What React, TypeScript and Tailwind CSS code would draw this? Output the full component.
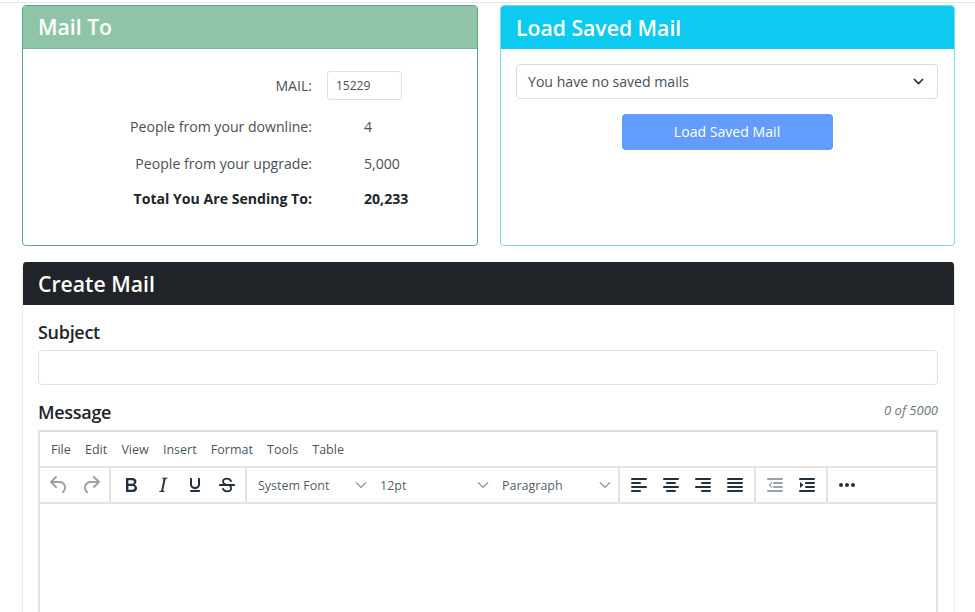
import React from "react";

const I = ({ d, c = "#222f3e" }: { d: string; c?: string }) => (
  <svg width="24" height="24" viewBox="0 0 24 24" fill={c}><path d={d} /></svg>
);
const Btn = ({ d, c }: { d: string; c?: string }) => (
  <div className="w-[32px] h-full flex items-center justify-center"><I d={d} c={c} /></div>
);
const bar = (x: number, y: number, w: number) => `M${x} ${y}h${w}a1 1 0 0 1 0 2h-${w}a1 1 0 0 1 0-2z`;
const P = {
  undo: "M6.4 8H12c3.7 0 6.2 2 6.8 5.1.6 2.7-.4 5.6-2.3 6.8a1 1 0 0 1-1-1.8c1.1-.6 1.8-2.7 1.4-4.6-.5-2.1-2.1-3.5-4.9-3.5H6.4l3.3 3.3a1 1 0 1 1-1.4 1.4l-5-5a1 1 0 0 1 0-1.4l5-5a1 1 0 0 1 1.4 1.4L6.4 8z",
  redo: "M17.6 10H12c-2.8 0-4.4 1.4-4.9 3.5-.4 2 .3 4 1.4 4.6a1 1 0 1 1-1 1.8c-2-1.2-2.9-4.1-2.3-6.8.6-3 3-5.1 6.8-5.1h5.6l-3.3-3.3a1 1 0 1 1 1.4-1.4l5 5a1 1 0 0 1 0 1.4l-5 5a1 1 0 0 1-1.4-1.4l3.3-3.3z",
  bold: "M7.8 19c-.3 0-.5 0-.6-.2l-.2-.5V5.7c0-.2 0-.4.2-.5l.6-.2h5c1.5 0 2.7.3 3.5 1 .7.6 1.1 1.4 1.1 2.5a3 3 0 0 1-.6 1.9c-.4.6-1 1-1.6 1.2.4.1.9.3 1.3.6s.8.7 1 1.2c.4.4.5 1 .5 1.6 0 1.3-.4 2.3-1.3 3-.8.7-2.1 1-3.8 1H7.8zm5-8.3c.6 0 1.2-.1 1.6-.5.4-.3.6-.7.6-1.3 0-1.1-.8-1.7-2.3-1.7H9.3v3.5h3.4zm.5 6c.7 0 1.3-.1 1.7-.4.4-.4.6-.9.6-1.5s-.2-1-.7-1.4c-.4-.3-1-.4-2-.4H9.4v3.8h4z",
  italic: "M16.7 4.7l-.1.9h-.3c-.6 0-1 0-1.4.3-.3.3-.4.6-.5 1.1l-2.1 9.8v.6c0 .5.4.8 1.4.8h.2l-.2.8H8l.2-.8h.2c1.1 0 1.8-.5 2-1.5l2-9.8.1-.5c0-.6-.4-.8-1.4-.8h-.3l.2-.9h5.8z",
  underline: "M16 5c.6 0 1 .4 1 1v5.5a4 4 0 0 1-.4 1.8l-1 1.4a5.3 5.3 0 0 1-5.5 1 5 5 0 0 1-1.6-1c-.5-.4-.8-.9-1.1-1.4a4 4 0 0 1-.4-1.8V6c0-.6.4-1 1-1s1 .4 1 1v5.5c0 .3 0 .6.2 1l.6.7a3.3 3.3 0 0 0 2.2.8 3.4 3.4 0 0 0 2.2-.8c.3-.2.4-.5.6-.8l.2-.9V6c0-.6.4-1 1-1zM8 17h8c.6 0 1 .4 1 1s-.4 1-1 1H8a1 1 0 0 1 0-2z",
  left: bar(5, 5, 14) + bar(5, 9, 8) + bar(5, 13, 14) + bar(5, 17, 8),
  center: bar(5, 5, 14) + bar(8, 9, 8) + bar(5, 13, 14) + bar(8, 17, 8),
  right: bar(5, 5, 14) + bar(11, 9, 8) + bar(5, 13, 14) + bar(11, 17, 8),
  justify: bar(5, 5, 14) + bar(5, 9, 14) + bar(5, 13, 14) + bar(5, 17, 14),
  outdent: bar(5, 5, 14) + bar(11, 9, 8) + bar(11, 13, 8) + bar(5, 17, 14) + "M8.6 9.2a.5.5 0 0 1 .7.7L7.2 12l2.1 2.1a.5.5 0 0 1-.7.7L6 12.4a.5.5 0 0 1 0-.8z",
  indent: bar(5, 5, 14) + bar(11, 9, 8) + bar(11, 13, 8) + bar(5, 17, 14) + "M5 9l3.5 3L5 15z",
  more: "M6 10a2 2 0 0 0-2 2c0 1.1.9 2 2 2a2 2 0 0 0 2-2 2 2 0 0 0-2-2zm12 0a2 2 0 0 0-2 2c0 1.1.9 2 2 2a2 2 0 0 0 2-2 2 2 0 0 0-2-2zm-6 0a2 2 0 0 0-2 2c0 1.1.9 2 2 2a2 2 0 0 0 2-2 2 2 0 0 0-2-2z",
};

const Strike = () => (
  <div className="w-[32px] h-full flex items-center justify-center">
    <svg width="24" height="24" viewBox="0 0 24 24" fill="none" stroke="#222f3e" strokeWidth="1.8" strokeLinecap="round">
      <path d="M16 8.2c-.7-1.6-2.1-2.5-4-2.5-2.4 0-4 1.2-4 3 0 1.3 1 2.1 2.4 2.7M8 15.8c.7 1.6 2.2 2.5 4.1 2.5 2.5 0 4-1.3 4-3.1 0-.9-.3-1.6-1-2.2" />
      <path d="M4.8 12h14.4" />
    </svg>
  </div>
);

const Sel = ({ t }: { t: string }) => (
  <div className="w-[122px] h-full pl-[11px] pr-[2px] flex items-center justify-between text-[12.5px] text-[#222f3e]/80">
    <span className="mt-[2px]">{t}</span>
    <svg width="12" height="12" viewBox="0 0 10 10" fill="none" stroke="#8a9099" strokeWidth="1.1" strokeLinecap="round"><path d="M1 3L5 7l4-4" /></svg>
  </div>
);

const Row = ({ label, value, bold, h }: { label: string; value: React.ReactNode; bold?: boolean; h: string }) => (
  <div className={`flex items-center ${h} ${bold ? "font-bold text-[#212529]" : "text-[#495057]"}`}>
    <div className="w-[289px] text-right">{label}</div>
    <div className="flex-1 pl-[52px]">{value}</div>
  </div>
);

export default function App() {
  return (
    <div className="h-[612px] overflow-hidden bg-white pl-[22px] pr-[20px] pt-[2px] text-[14.1px] text-[#212529] relative" style={{ fontFamily: '"Open Sans", "Noto Sans", sans-serif' }}>
      <div className="absolute left-0 right-0 top-[2px] h-px bg-[#e3e5e8]" />
      <div className="pt-[3px] flex gap-[22px] h-[244px]">
        <section className="w-[456px] rounded-[4px] border border-[#5aa688] overflow-hidden flex flex-col">
          <h2 className="h-[43px] shrink-0 bg-[#8fc4a9] text-white text-[21.2px] font-semibold pl-[15px] flex items-center border-b border-[#7db89b]">Mail To</h2>
          <div className="pt-[22px]">
            <div className="flex items-center h-[29px] text-[#495057]">
              <div className="w-[289px] text-right">MAIL:</div>
              <div className="pl-[15px]">
                <div className="w-[75px] h-[29px] rounded-[3px] border border-[#dcdfe3] flex items-center pl-[8px] text-[12px]">15229</div>
              </div>
            </div>
            <Row h="h-[37px] mt-[8px]" label="People from your downline:" value="4" />
            <Row h="h-[37px]" label="People from your upgrade:" value="5,000" />
            <Row h="h-[33px]" bold label="Total You Are Sending To:" value="20,233" />
          </div>
        </section>
        <section className="w-[455px] rounded-[4px] border border-[#72dcee] overflow-hidden flex flex-col">
          <h2 className="h-[43px] shrink-0 bg-[#0dcaf0] text-white text-[21.2px] font-semibold pl-[15px] flex items-center">Load Saved Mail</h2>
          <div className="pl-[15px] pr-[16px] pt-[15px]">
            <div className="h-[35px] rounded-[4px] border border-[#d9dce0] flex items-center justify-between pl-[11px] pr-[13px] text-[#495057]">
              <span>You have no saved mails</span>
              <svg width="11" height="11" viewBox="0 0 16 16" fill="none" stroke="#343a40" strokeWidth="2.4" strokeLinecap="round" strokeLinejoin="round"><path d="M2 5l6 6 6-6" /></svg>
            </div>
            <div className="mt-[15px] flex justify-center">
              <div className="w-[211px] h-[36px] rounded-[4px] bg-[#639cff] text-white flex items-center justify-center">Load Saved Mail</div>
            </div>
          </div>
        </section>
      </div>
      <section className="mt-[16px] border border-t-0 border-[#ececec] rounded-t-[4px] h-[400px] overflow-hidden">
        <h2 className="h-[43px] bg-[#212529] text-white text-[21.2px] font-semibold pl-[15px] flex items-center">Create Mail</h2>
        <div className="pl-[15px] pr-[16px]">
          <div className="h-[45px] flex items-end pb-[9px] text-[18px] font-semibold leading-none tracking-[-0.3px]">Subject</div>
          <div className="h-[35px] rounded-[4px] border border-[#dcdfe3]" />
          <div className="h-[45px] flex items-end justify-between pb-[9px]">
            <span className="text-[18px] font-semibold leading-none tracking-[-0.3px]">Message</span>
            <span className="text-[13px] italic text-[#6c757d] self-start mt-[16px]">0 of 5000</span>
          </div>
          <div className="border-2 border-b-0 border-[#e3e3e3] border-t-[#dedede] h-[200px]">
            <div className="h-[36px] flex items-center gap-[14.2px] pl-[11px] pt-[2px] text-[12.5px] text-[#222f3e]/85 border-b-2 border-[#e3e3e3]">
              {["File", "Edit", "View", "Insert", "Format", "Tools", "Table"].map((m) => <span key={m}>{m}</span>)}
            </div>
            <div className="h-[36px] flex border-b-2 border-[#e3e3e3]">
              <div className="w-[71px] pl-[3px] flex border-r-2 border-[#e3e3e3]">
                <Btn d={P.undo} c="#9aa1a9" /><Btn d={P.redo} c="#9aa1a9" />
              </div>
              <div className="w-[136px] pl-[4px] flex border-r-2 border-[#e3e3e3]">
                <Btn d={P.bold} /><Btn d={P.italic} /><Btn d={P.underline} /><Strike />
              </div>
              <div className="w-[373px] flex border-r-2 border-[#e3e3e3]">
                <Sel t="System Font" /><Sel t="12pt" /><Sel t="Paragraph" />
              </div>
              <div className="w-[136px] pl-[3px] flex border-r-2 border-[#e3e3e3]">
                <Btn d={P.left} /><Btn d={P.center} /><Btn d={P.right} /><Btn d={P.justify} />
              </div>
              <div className="w-[72px] pl-[3px] flex border-r-2 border-[#e3e3e3]">
                <Btn d={P.outdent} c="#9aa1a9" /><Btn d={P.indent} />
              </div>
              <div className="pl-[3px] flex"><Btn d={P.more} /></div>
            </div>
          </div>
        </div>
      </section>
    </div>
  );
}
